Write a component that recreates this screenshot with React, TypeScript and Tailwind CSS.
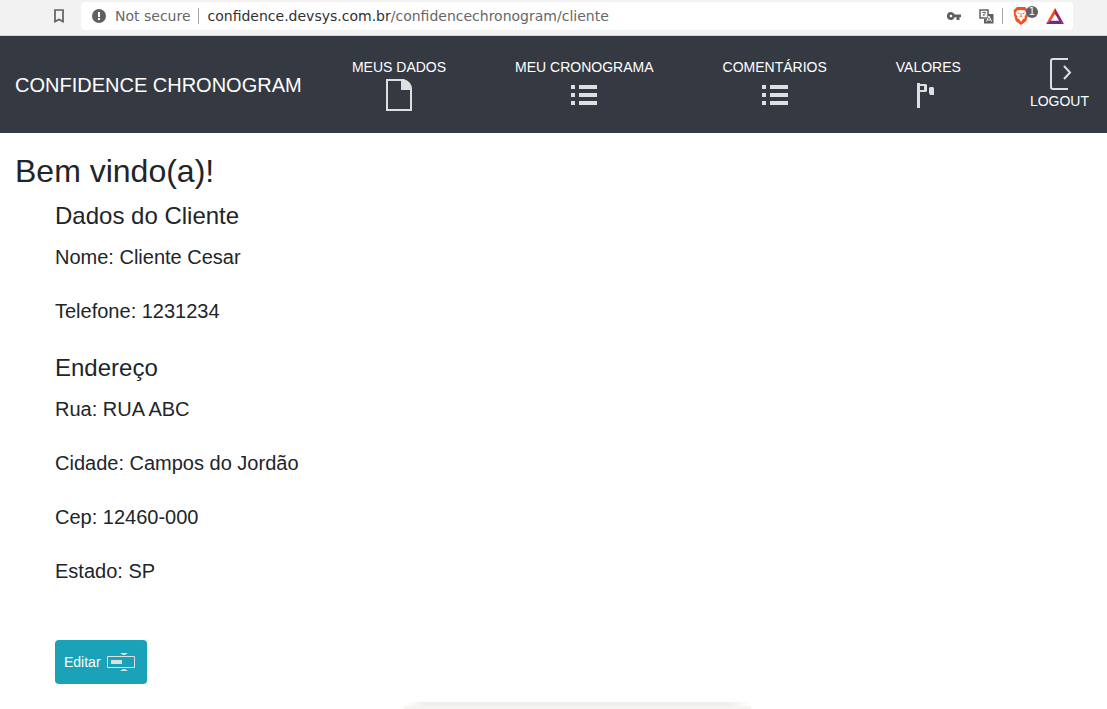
import React from "react";

function PageIcon() {
  return (
    <svg viewBox="0 0 32 32" className="h-8 w-8" aria-hidden="true">
      <path d="M4 1h15v9h9v21H4z" fill="none" stroke="#dedfe0" strokeWidth="2" />
      <path d="M19 0h2q8 3 8 10H19z" fill="#dedfe0" />
    </svg>
  );
}

function ListIcon() {
  return (
    <svg viewBox="0 0 32 32" className="h-8 w-8" fill="#dedfe0" aria-hidden="true">
      <path d="M3 6h4v4H3zM11 6h18v4H11zM3 14h4v4H3zM11 14h18v4H11zM3 22h4v4H3zM11 22h18v4H11z" />
    </svg>
  );
}

function FlagIcon() {
  return (
    <svg viewBox="0 0 32 32" className="h-8 w-8" fill="#dedfe0" aria-hidden="true">
      <path fillRule="evenodd" d="M5 4h3v1h6l1 1v6l-1 1H8v16H5zM8 7v4h4V7z" />
      <path d="M18 8h3l1 1v7h-4l-1-2v-5z" />
    </svg>
  );
}

function LogoutIcon() {
  return (
    <svg viewBox="0 0 32 32" className="h-8 w-8" fill="none" stroke="#dedfe0" strokeWidth="2" aria-hidden="true">
      <path d="M25 1H10Q8 1 8 3v26q0 2 2 2h15M21 8l6 6.500-6 6.500" />
    </svg>
  );
}

function InputIcon() {
  return (
    <svg viewBox="0 0 32 32" className="h-8 w-8" aria-hidden="true">
      <path d="M2.500 10.500h27v11h-27z" fill="none" stroke="#dedfe0" />
      <path d="M6 14h11v4H6zM15 7h8l-3 2h-2zM15 25h8l-3-2h-2z" fill="#dedfe0" />
    </svg>
  );
}

function BrowserBar() {
  return (
    <div className="flex h-9 items-start border-b border-[#d5d6d8] bg-[#f2f2f2] pt-0.5 pr-[34px] pl-[54px] font-['DejaVu_Sans',sans-serif] text-sm">
      <button type="button" aria-label="Favoritar" className="mt-[7px] mr-[17px] shrink-0">
        <svg viewBox="0 0 10 14" className="block h-3.5 w-2.5" fill="none" stroke="#5f6063" strokeWidth="1.700">
          <path d="M1 1h8v11.500L5 10.500l-4 2z" />
        </svg>
      </button>
      <div className="flex h-7 min-w-0 flex-1 items-center rounded bg-white pr-[9px] pl-[11px] text-[#66676a]">
        <svg viewBox="0 0 14 14" className="mr-[9px] h-3.5 w-3.5 shrink-0" aria-hidden="true">
          <circle cx="7" cy="7" r="7" fill="#5f6063" />
          <path d="M6 3h2v5H6zM6 9h2v2H6z" fill="#fff" />
        </svg>
        <span className="whitespace-nowrap">Not secure</span>
        <span className="mr-[9px] ml-[7px] h-4 w-px shrink-0 bg-[#a5a6a8]" />
        <p className="min-w-0 flex-1 truncate">
          <span className="text-[#303134]">confidence.devsys.com.br</span>/confidencechronogram/cliente
        </p>
        <button type="button" aria-label="Senhas" className="mr-[18px] shrink-0">
          <svg viewBox="0 0 14 8" className="block h-2 w-3.5" fill="#5f6063">
            <path fillRule="evenodd" d="M4 0a4 4 0 1 0 3.700 5.300H9.500V8h3V5.300H14V2.500H7.700A4 4 0 0 0 4 0zm0 2.700a1.300 1.300 0 1 1 0 2.600 1.300 1.300 0 0 1 0-2.600z" />
          </svg>
        </button>
        <button type="button" aria-label="Traduzir" className="mr-2 shrink-0">
          <svg viewBox="0 0 15 15" className="block h-[15px] w-[15px]">
            <path d="M1 1h8v8H1z" fill="#fff" stroke="#5f6063" strokeWidth="1.500" />
            <path d="M3 3.500h4M5 2.500v1M3.500 7Q6 6 6.500 3.500M4 5l1.500 1.500" stroke="#5f6063" strokeWidth=".8" fill="none" />
            <path d="M9 5h5.500v9.500H5V10h4z" fill="#5f6063" />
            <path d="m7.500 12.500 2.500-5.500 2.500 5.500M8.500 11h3" stroke="#fff" fill="none" />
          </svg>
        </button>
        <span className="mr-2.5 h-4 w-px shrink-0 bg-[#a5a6a8]" />
        <button type="button" aria-label="Brave Shields" className="relative mr-2 h-[18px] w-[25px] shrink-0">
          <svg viewBox="0 0 16 18" className="block h-[18px] w-4">
            <path d="M4 0h8l2 2 1.500 1-.6 3 .4 1-2 7L8 18l-5.300-4-2-7 .4-1-.6-3L2 2z" fill="#f4511e" />
            <path d="M4 3.500 8 3l4 .500 1.500 3-2 3 .5 1.500-2.500 1.500L8 15l-1.500-2.500L4 11l.5-1.500-2-3z" fill="#fff" />
            <path d="m4.500 6 2 .7M11.500 6l-2 .7M8 6v3M6.500 10 8 9l1.500 1" stroke="#f4511e" strokeWidth=".8" fill="none" />
          </svg>
          <span className="absolute -top-px right-0 flex h-3 w-3 items-center justify-center rounded-full bg-[#5d6072] text-[10px] leading-3 text-white">1</span>
        </button>
        <button type="button" aria-label="Brave Rewards" className="shrink-0">
          <svg viewBox="0 0 18 16" className="block h-4 w-[18px]">
            <path d="M9 0 0 16l5-3 4-6z" fill="#ff4724" />
            <path d="m9 0 9 16-5-3-4-6z" fill="#9e1f63" />
            <path d="M0 16h18l-5-3.500H5z" fill="#662d91" />
            <path d="m9 6 4 6.500H5z" fill="#fff" />
          </svg>
        </button>
      </div>
    </div>
  );
}

const links = [
  { label: "MEUS DADOS", Icon: PageIcon },
  { label: "MEU CRONOGRAMA", Icon: ListIcon },
  { label: "COMENTÁRIOS", Icon: ListIcon },
  { label: "VALORES", Icon: FlagIcon },
];

function Navbar() {
  return (
    <nav className="flex min-h-[97px] items-center bg-[#353a42] pr-[18px] pl-[15px] text-white">
      <a href="#inicio" className="mr-auto text-xl leading-[30px] whitespace-nowrap">CONFIDENCE CHRONOGRAM</a>
      <div className="flex items-stretch gap-[69px] py-5 text-sm leading-[22px] whitespace-nowrap">
        {links.map(({ label, Icon }) => (
          <a key={label} href="#secao" className="flex flex-col items-center gap-px pb-[2px]">
            {label}
            <Icon />
          </a>
        ))}
        <a href="#logout" className="flex flex-col items-center justify-center">
          <LogoutIcon />
          LOGOUT
        </a>
      </div>
    </nav>
  );
}

function Section({ title, rows }: { title: string; rows: [string, string][] }) {
  return (
    <section>
      <h2 className="mb-3 text-2xl leading-7">{title}</h2>
      <div className="flex flex-col gap-6 text-xl leading-[30px]">
        {rows.map(([name, value]) => (
          <p key={name}>{name}: {value}</p>
        ))}
      </div>
    </section>
  );
}

export default function App() {
  return (
    <div className="bg-white font-['Liberation_Sans',Arial,sans-serif] text-[#212529]">
      <BrowserBar />
      <Navbar />
      <main className="px-[15px] pt-[19px]">
        <h1 className="mb-3 text-[32px] leading-[38px]">Bem vindo(a)!</h1>
        <div className="flex flex-col items-start gap-7 pl-10">
          <Section title="Dados do Cliente" rows={[["Nome", "Cliente Cesar"], ["Telefone", "1231234"]]} />
          <Section
            title="Endereço"
            rows={[["Rua", "RUA ABC"], ["Cidade", "Campos do Jordão"], ["Cep", "12460-000"], ["Estado", "SP"]]}
          />
          <button type="button" className="mt-[26px] flex h-11 items-center gap-1 rounded bg-[#19a2b8] pr-2.5 pl-[9px] text-sm text-white">
            Editar
            <InputIcon />
          </button>
        </div>
      </main>
      <div className="mt-[18px] flex justify-center pl-12">
        <div className="w-[347px]">
          <div className="h-1 bg-[linear-gradient(90deg,#fff,#efefef_6%,#efefef_94%,#fff)]" />
          <div className="h-[3px] bg-[#f5f4f2]" />
        </div>
      </div>
    </div>
  );
}
